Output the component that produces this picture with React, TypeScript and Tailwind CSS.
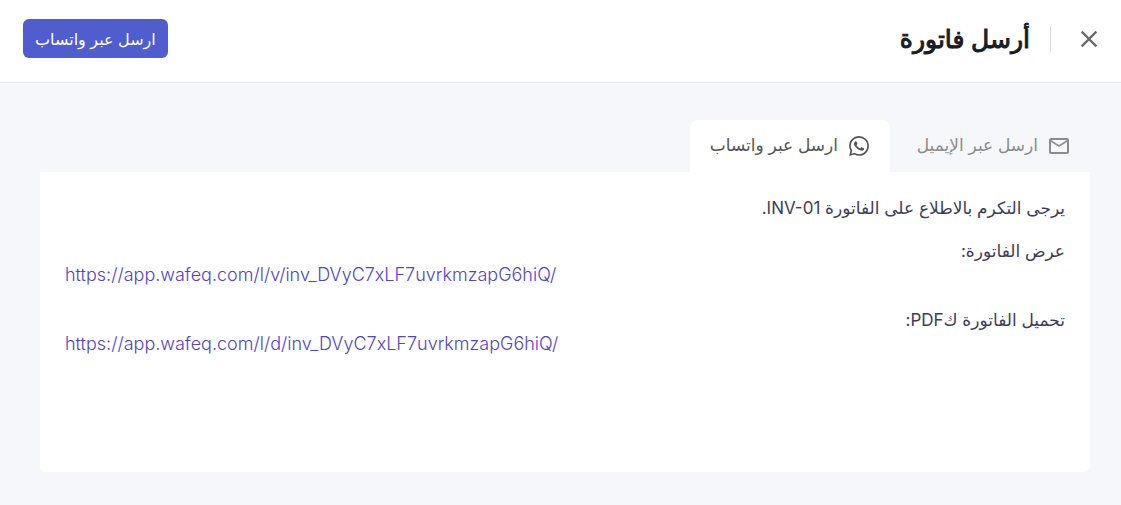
import { useState } from "react";
import { clsx } from "clsx";
import { MdClose, MdMailOutline, MdWhatsapp } from "react-icons/md";

const tabs = [
  { id: "email", label: "ارسل عبر الإيميل", icon: MdMailOutline },
  { id: "whatsapp", label: "ارسل عبر واتساب", icon: MdWhatsapp },
];

const links = [
  { label: "عرض الفاتورة:", href: "https://app.wafeq.com/l/v/inv_DVyC7xLF7uvrkmzapG6hiQ/" },
  { label: "تحميل الفاتورة كPDF:", href: "https://app.wafeq.com/l/d/inv_DVyC7xLF7uvrkmzapG6hiQ/" },
];

function Header() {
  return (
    <header className="flex items-center justify-between border-b border-[#e6e7eb] bg-white pt-[19px] pb-6 pr-[18px] pl-[23px]">
      <div className="flex items-center">
        <button type="button" aria-label="إغلاق" className="text-[#6b6b6b]">
          <MdClose className="size-7 stroke-[#6b6b6b]" />
        </button>
        <div className="mr-6 ml-5 h-[26px] w-px bg-[#d9dade]" />
        <h1 className="text-[25px] leading-9 font-medium whitespace-nowrap text-[#1b1c22] [-webkit-text-stroke:1px]">
          أرسل فاتورة
        </h1>
      </div>
      <button type="button" className="h-[39px] rounded-md bg-[#505dce] px-3 pt-px text-base whitespace-nowrap text-white">
        ارسل عبر واتساب
      </button>
    </header>
  );
}

export default function App() {
  const [active, setActive] = useState("whatsapp");

  return (
    <div dir="rtl" lang="ar" className="min-h-screen bg-[#f6f7fa] font-['Inter','DejaVu_Sans',sans-serif]">
      <Header />
      <main className="pt-[37px] pr-[31px] pb-[33px] pl-10">
        <div role="tablist" className="flex">
          {tabs.map((tab) => (
            <button
              key={tab.id}
              id={tab.id}
              type="button"
              role="tab"
              aria-selected={active === tab.id}
              onClick={() => setActive(tab.id)}
              className={clsx(
                "flex h-[52px] min-w-[200px] items-center gap-[9px] rounded-t-lg pr-[19px] pl-[18px] text-[17px] whitespace-nowrap",
                active === tab.id ? "bg-white text-[#555555]" : "text-[#8c8c8c]"
              )}
            >
              <tab.icon className="size-6" />
              {tab.label}
            </button>
          ))}
        </div>
        <section
          role="tabpanel"
          aria-labelledby={active}
          className="min-h-[300px] rounded-b-md bg-white px-[25px] pt-[25px] text-[17px] leading-[23px] text-[#3c3c58]"
        >
          <p className="mb-5">يرجى التكرم بالاطلاع على الفاتورة INV-01.</p>
          {links.map((link) => (
            <div key={link.href} className="mb-[22px]">
              <p>{link.label}</p>
              <p dir="ltr">
                <a href={link.href} className="text-[18px] font-[350] text-[#5443c6]">
                  {link.href}
                </a>
              </p>
            </div>
          ))}
        </section>
      </main>
    </div>
  );
}
